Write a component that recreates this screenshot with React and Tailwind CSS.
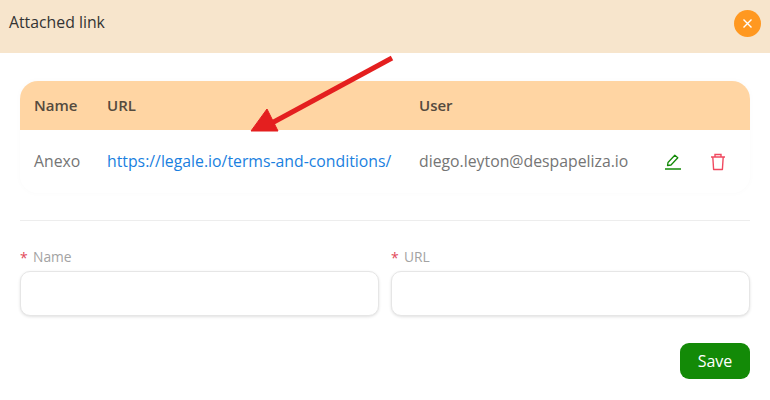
import React from "react"

const font = { fontFamily: '"Open Sans", sans-serif' }

function EditIcon() {
  return (
    <svg width="18" height="18" viewBox="0 0 18 18" fill="none" stroke="#138a07" strokeWidth="1.3">
      <path d="M3.5 12.5 L4 9.5 L10.8 2.2 L13.8 4.8 L7 12 Z" strokeLinejoin="round" />
      <path d="M1 16 H17" strokeWidth="1.5" />
    </svg>
  )
}

function TrashIcon() {
  return (
    <svg width="16" height="18" viewBox="0 0 16 18" fill="none" stroke="#f0495f" strokeWidth="1.4">
      <path d="M1 4 H15" />
      <path d="M5 4 V1.5 H11 V4" />
      <path d="M2.8 4 L3.6 16.5 H12.4 L13.2 4" strokeLinejoin="round" />
    </svg>
  )
}

function Field({ label, className }) {
  return (
    <div className={className}>
      <label className="flex items-center h-[20px] text-[13.8px] text-[#a3a3a3]">
        <span className="text-[#e2485a] w-[13px] text-[14px]">*</span>
        {label}
      </label>
      <input className="mt-[4px] block w-full h-[45px] rounded-[10px] border border-[#e6e6e6] bg-white shadow-[0_1px_3px_rgba(0,0,0,0.12)] outline-none" />
    </div>
  )
}

export default function App() {
  return (
    <div className="relative w-[770px] h-[400px] bg-white overflow-hidden" style={font}>
      <div className="flex items-center justify-between h-[53px] pb-[7px] pl-[9px] pr-[9px] bg-[#f7e5cc]">
        <span className="text-[15.8px] text-[#333333]">Attached link</span>
        <button className="flex items-center justify-center w-[27px] h-[27px] rounded-full bg-[#ff9820] text-white">
          <svg width="11" height="11" viewBox="0 0 11 11" stroke="#fff" strokeWidth="1.4">
            <path d="M1.5 1.5 L9.5 9.5 M9.5 1.5 L1.5 9.5" />
          </svg>
        </button>
      </div>

      <div className="px-[20px] pt-[28px]">
        <div className="rounded-[18px] shadow-[0_0_6px_rgba(0,0,0,0.025)] overflow-hidden">
          <div className="flex items-center h-[49px] bg-[#ffd5a3] text-[15px] font-semibold text-[#544a3e]">
            <span className="w-[87px] pl-[14px]">Name</span>
            <span className="w-[312px]">URL</span>
            <span>User</span>
          </div>
          <div className="flex items-center h-[63px] pt-[1px] text-[15.8px] text-[#757575]">
            <span className="w-[87px] pl-[14px]">Anexo</span>
            <span className="w-[312px] text-[#1a7fe0] whitespace-nowrap">https://legale.io/terms-and-conditions/</span>
            <span className="w-[245px] whitespace-nowrap">diego.leyton@despapeliza.io</span>
            <span className="flex items-center gap-[28px]">
              <EditIcon />
              <TrashIcon />
            </span>
          </div>
        </div>

        <div className="mt-[27px] border-t border-[#ededed]" />

        <div className="flex gap-[12px] mt-[26px]">
          <Field label="Name" className="flex-1" />
          <Field label="URL" className="flex-1" />
        </div>

        <div className="flex justify-end mt-[27px]">
          <button className="w-[70px] h-[36px] rounded-[9px] bg-[#138a07] text-white text-[16px]">Save</button>
        </div>
      </div>

      {/* annotation arrow over the table */}
      <svg className="absolute left-[240px] top-[50px]" width="160" height="90" viewBox="0 0 160 90">
        <path d="M152 8 L30 74" stroke="#e41f1f" strokeWidth="5" />
        <path d="M11 81 L38 81 L27 59 Z" fill="#e41f1f" stroke="#e41f1f" strokeWidth="1" />
      </svg>
    </div>
  )
}
